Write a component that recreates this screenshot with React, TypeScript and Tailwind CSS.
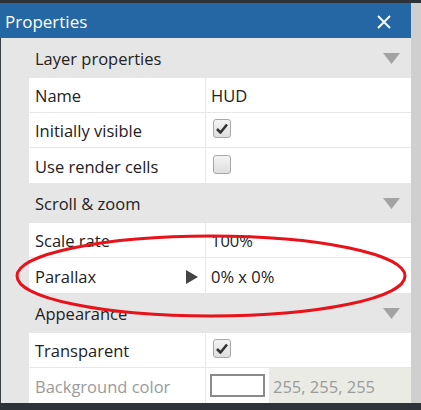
import React from "react";

const Tri = () => (
  <svg width="17" height="11" viewBox="0 0 17 11" className="mr-[11px]">
    <polygon points="0,0 17,0 8.5,11" fill="#a3a3a3" />
  </svg>
);

const Check = ({ checked }: { checked: boolean }) => (
  <div className="w-[18px] h-[19px] rounded-[3px] border border-[#a8a8a8] bg-gradient-to-b from-[#f4f4f4] to-[#dedede] flex items-center justify-center mt-[-6px] ml-[2px]">
    {checked && (
      <svg width="12" height="11" viewBox="0 0 12 11">
        <path d="M1 6 L4.5 9.5 L11 1.5" stroke="#333" strokeWidth="2.6" fill="none" strokeLinejoin="round" />
      </svg>
    )}
  </div>
);

const Header = ({ title }: { title: string }) => (
  <div className="h-[40px] flex items-center justify-between pl-[34px] text-[#222]">
    <span className="pt-[3px]">{title}</span>
    <Tri />
  </div>
);

const Row = ({
  label,
  children,
  gray,
  arrow,
  last,
}: {
  label: string;
  children?: React.ReactNode;
  gray?: boolean;
  arrow?: boolean;
  last?: boolean;
}) => (
  <div className={`ml-[28px] h-[35px] flex bg-white ${last ? "" : "border-b border-[#e8e8e8]"}`}>
    <div className={`w-[177px] border-r border-[#e8e8e8] flex items-center pl-[6px] pr-[7px] justify-between ${gray ? "text-[#9a9a9a]" : "text-[#222]"}`}>
      <span className="pt-[3px]">{label}</span>
      {arrow && (
        <svg width="12" height="14" viewBox="0 0 12 14" className="mt-[3px]">
          <polygon points="0,0 12,7 0,14" fill="#444" />
        </svg>
      )}
    </div>
    <div className="flex-1 flex items-center pl-[5px] text-[#222] pt-[3px]">{children}</div>
  </div>
);

export default function App() {
  return (
    <div
      className="w-[421px] h-[410px] bg-[#2d3338] pt-[3px] relative overflow-hidden"
      style={{ fontFamily: '"Open Sans", "Noto Sans", sans-serif' }}
    >
      <div className="flex h-[400px]">
        <div className="w-[411px] bg-[#e6e6e6] text-[16.5px] border-l border-[#3a3f44]">
          <div className="h-[35px] bg-[#2467a4] flex items-center justify-between pl-[5px] pr-[20px] text-white text-[17px] -ml-[1px]">
            <span className="pt-[3px]">Properties</span>
            <svg width="14" height="14" viewBox="0 0 14 14" className="mt-[2px]">
              <path d="M1 1 L13 13 M13 1 L1 13" stroke="white" strokeWidth="1.8" />
            </svg>
          </div>
          <Header title="Layer properties" />
          <Row label="Name">HUD</Row>
          <Row label="Initially visible">
            <Check checked />
          </Row>
          <Row label="Use render cells" last>
            <Check checked={false} />
          </Row>
          <Header title="Scroll & zoom" />
          <Row label="Scale rate">100%</Row>
          <Row label="Parallax" arrow last>
            0% x 0%
          </Row>
          <Header title="Appearance" />
          <Row label="Transparent">
            <Check checked />
          </Row>
          <div className="ml-[28px] h-[35px] flex bg-white">
            <div className="w-[177px] border-r border-[#e8e8e8] flex items-center pl-[6px] text-[#9a9a9a]">
              <span className="pt-[3px]">Background color</span>
            </div>
            <div className="flex-1 flex items-center">
              <div className="pl-[4px] pr-[4px] h-full flex items-center">
                <div className="w-[55px] h-[23px] border-2 border-[#8a8a8a] bg-white" />
              </div>
              <div className="flex-1 h-full bg-[#ebebe6] flex items-center pl-[4px] text-[#9a9a9a]">
                <span className="pt-[3px]">255, 255, 255</span>
              </div>
            </div>
          </div>
        </div>
        <div className="flex-1 bg-[#cfcfcf]" />
      </div>
      <svg className="absolute left-0 top-0 pointer-events-none" width="421" height="410">
        <ellipse cx="211" cy="276" rx="194" ry="40" fill="none" stroke="#e8121b" strokeWidth="3" />
      </svg>
    </div>
  );
}
